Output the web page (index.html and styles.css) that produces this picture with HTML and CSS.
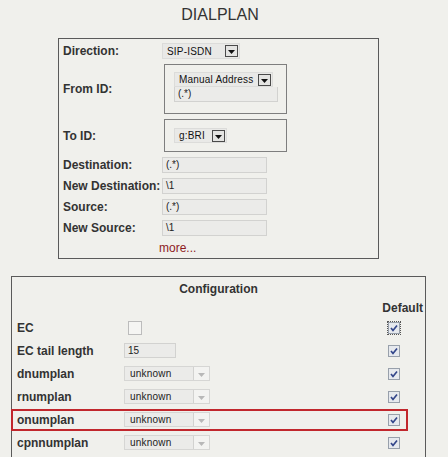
FILE: index.html
```html
<!DOCTYPE html>
<html>
<head>
<meta charset="utf-8">
<title>DIALPLAN</title>
<link rel="stylesheet" href="styles.css">
</head>
<body>
<h1 class="title">DIALPLAN</h1>

<div class="panel route">
  <span class="lbl">Direction:</span>
  <div class="sel sel-dir"><span class="txt">SIP-ISDN</span><span class="btn"><svg width="7" height="4" viewBox="0 0 7 4"><polygon points="0,0 7,0 3.5,4" fill="#111"/></svg></span></div>

  <span class="lbl">From ID:</span>
  <div class="subbox from">
    <div class="sel sel-man"><span class="txt">Manual Address</span><span class="btn"><svg width="7" height="4" viewBox="0 0 7 4"><polygon points="0,0 7,0 3.5,4" fill="#111"/></svg></span></div>
    <div class="inp inp-from">(.*)</div>
  </div>

  <span class="lbl">To ID:</span>
  <div class="subbox to">
    <div class="sel sel-bri"><span class="txt">g:BRI</span><span class="btn"><svg width="7" height="4" viewBox="0 0 7 4"><polygon points="0,0 7,0 3.5,4" fill="#111"/></svg></span></div>
  </div>

  <span class="lbl">Destination:</span>
  <div class="inp inp-wide">(.*)</div>

  <span class="lbl">New Destination:</span>
  <div class="inp inp-wide">\1</div>

  <span class="lbl">Source:</span>
  <div class="inp inp-wide">(.*)</div>

  <span class="lbl">New Source:</span>
  <div class="inp inp-wide">\1</div>

  <span></span>
  <a class="more">more...</a>
</div>

<div class="panel config">
  <div class="cfg-title">Configuration</div>
  <div class="cfg-default">Default</div>
  <div class="cfg-rows">
    <div class="crow">
      <span class="lbl">EC</span>
      <span class="box-ec"></span>
      <span class="chk focus"><svg width="10" height="10" viewBox="0 0 10 10"><path d="M2 5 L4 7.5 L8 2.5" fill="none" stroke="#33468a" stroke-width="1.7"/></svg></span>
    </div>
    <div class="crow">
      <span class="lbl">EC tail length</span>
      <div class="inp inp-tail">15</div>
      <span class="chk"><svg width="10" height="10" viewBox="0 0 10 10"><path d="M2 5 L4 7.5 L8 2.5" fill="none" stroke="#33468a" stroke-width="1.7"/></svg></span>
    </div>
    <div class="crow">
      <span class="lbl">dnumplan</span>
      <div class="dsel"><span class="txt">unknown</span><span class="dbtn"><svg width="7" height="4" viewBox="0 0 7 4"><polygon points="0,0 7,0 3.5,4" fill="#b8b8b8"/></svg></span></div>
      <span class="chk"><svg width="10" height="10" viewBox="0 0 10 10"><path d="M2 5 L4 7.5 L8 2.5" fill="none" stroke="#33468a" stroke-width="1.7"/></svg></span>
    </div>
    <div class="crow">
      <span class="lbl">rnumplan</span>
      <div class="dsel"><span class="txt">unknown</span><span class="dbtn"><svg width="7" height="4" viewBox="0 0 7 4"><polygon points="0,0 7,0 3.5,4" fill="#b8b8b8"/></svg></span></div>
      <span class="chk"><svg width="10" height="10" viewBox="0 0 10 10"><path d="M2 5 L4 7.5 L8 2.5" fill="none" stroke="#33468a" stroke-width="1.7"/></svg></span>
    </div>
    <div class="crow hl">
      <span class="lbl">onumplan</span>
      <div class="dsel"><span class="txt">unknown</span><span class="dbtn"><svg width="7" height="4" viewBox="0 0 7 4"><polygon points="0,0 7,0 3.5,4" fill="#b8b8b8"/></svg></span></div>
      <span class="chk"><svg width="10" height="10" viewBox="0 0 10 10"><path d="M2 5 L4 7.5 L8 2.5" fill="none" stroke="#33468a" stroke-width="1.7"/></svg></span>
    </div>
    <div class="crow">
      <span class="lbl">cpnnumplan</span>
      <div class="dsel"><span class="txt">unknown</span><span class="dbtn"><svg width="7" height="4" viewBox="0 0 7 4"><polygon points="0,0 7,0 3.5,4" fill="#b8b8b8"/></svg></span></div>
      <span class="chk"><svg width="10" height="10" viewBox="0 0 10 10"><path d="M2 5 L4 7.5 L8 2.5" fill="none" stroke="#33468a" stroke-width="1.7"/></svg></span>
    </div>
  </div>
</div>
</body>
</html>
```

FILE: styles.css
```css
html, body {
  margin: 0;
  padding: 0;
  background: #f0f0ec;
  font-family: "Liberation Sans", Arial, sans-serif;
  color: #333;
  overflow: hidden;
}

.title {
  margin: 0;
  padding-top: 6px;
  font-size: 16px;
  font-weight: normal;
  line-height: 18px;
  text-align: center;
  color: #333;
  width: 440px;
}

.panel {
  border: 1px solid #5a5a5a;
  box-sizing: border-box;
}

.lbl {
  font-size: 12px;
  font-weight: bold;
  color: #333;
  line-height: 14px;
  white-space: nowrap;
}

/* top panel */
.route {
  margin: 14px 0 0 58px;
  width: 321px;
  padding: 4px 0 2px 4px;
  display: grid;
  grid-template-columns: 99px 1fr;
  row-gap: 5px;
  align-items: center;
}

.sel {
  display: flex;
  align-items: center;
  justify-content: space-between;
  background: #e9e9e7;
  border: 1px solid #dcdcda;
  box-sizing: border-box;
  height: 16px;
  font-size: 10px;
  color: #111;
}
.sel .txt { padding-left: 4px; letter-spacing: 0.2px; }
.sel .btn {
  width: 13px;
  height: 12px;
  border: 1px solid #4a4a4a;
  background: #e4e4e2;
  display: flex;
  align-items: center;
  justify-content: center;
  margin-right: 1px;
  padding-top: 2px;
  box-sizing: border-box;
}
.sel-dir { width: 78px; }
.sel-man { width: 99px; height: 15px; }
.sel-bri { width: 53px; height: 15px; }

.subbox {
  border: 1px solid #7e7e7e;
  box-sizing: border-box;
  width: 123px;
  margin-left: 2px;
  padding-left: 9px;
}
.from { height: 50px; padding-top: 7px; }
.to { height: 33px; padding-top: 8px; }

.inp {
  background: #ebebe9;
  border: 1px solid #d2d2d0;
  box-sizing: border-box;
  height: 16px;
  font-size: 10px;
  line-height: 14px;
  padding-left: 3px;
  color: #222;
}
.inp-from { width: 104px; height: 15px; border-top: none; }
.inp-wide { width: 105px; }

.more {
  margin-left: -3px;
  font-size: 12px;
  line-height: 15px;
  color: #8e1b1f;
  text-decoration: none;
}

/* configuration panel */
.config {
  margin: 17px 0 0 11px;
  width: 415px;
  height: 200px;
}
.cfg-title {
  font-size: 12px;
  font-weight: bold;
  line-height: 16px;
  padding-top: 4px;
  text-align: center;
}
.cfg-default {
  font-size: 12px;
  font-weight: bold;
  line-height: 16px;
  margin-top: 3px;
  text-align: right;
  padding-right: 2px;
}
.crow {
  display: grid;
  grid-template-columns: 107px 1fr 37px;
  align-items: center;
  height: 23px;
  padding-left: 5px;
  position: relative;
}
.hl::after {
  content: "";
  position: absolute;
  left: -1px;
  top: 1px;
  width: 397px;
  height: 22px;
  border: 2px solid #c1272d;
  box-sizing: border-box;
}
.box-ec {
  margin-left: 4px;
  width: 14px;
  height: 14px;
  box-sizing: border-box;
  border: 1px solid #bcbcbc;
  background: #f5f5f3;
}
.inp-tail { width: 52px; height: 15px; }
.dsel {
  width: 86px;
  height: 15px;
  box-sizing: border-box;
  background: #ebebe9;
  border: 1px solid #d6d6d4;
  display: flex;
  justify-content: space-between;
  align-items: stretch;
  font-size: 10px;
  color: #222;
}
.dsel .txt { padding-left: 5px; line-height: 13px; letter-spacing: 0.2px; }
.dbtn {
  width: 16px;
  background: #f3f3f1;
  border-left: 1px solid #d2d2d0;
  display: flex;
  align-items: center;
  justify-content: center;
  padding-top: 3px;
  box-sizing: border-box;
}
.chk {
  width: 12px;
  height: 12px;
  box-sizing: border-box;
  border: 1px solid #98a0ab;
  background: #e6e9ee;
  display: flex;
  align-items: center;
  justify-content: center;
}
.chk.focus {
  outline: 1px dotted #555;
  outline-offset: 0;
}
```
